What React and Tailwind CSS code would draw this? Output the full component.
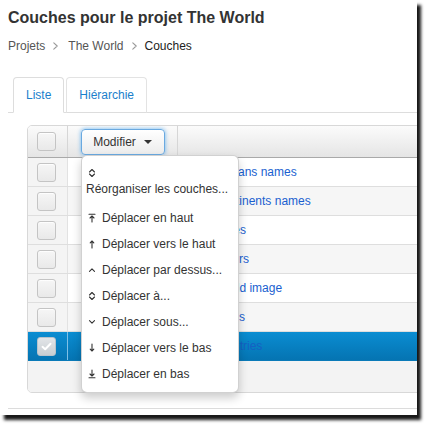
import React from "react";

const Ico = ({ d }) => (
  <svg width="8" height="10" viewBox="0 0 8 10" fill="none" stroke="#333" strokeWidth="1.1" strokeLinecap="round" strokeLinejoin="round">
    <path d={d} />
  </svg>
);

const I = {
  upDown: "M1.5 4 L4 1.5 L6.5 4 M1.5 6 L4 8.5 L6.5 6",
  toTop: "M1 1.2 H7 M4 9 V3 M2 5 L4 3 L6 5",
  up: "M4 9 V2 M2.2 3.8 L4 2 L5.8 3.8",
  chevUp: "M1.5 6.3 L4 3.8 L6.5 6.3",
  chevDown: "M1.5 3.7 L4 6.2 L6.5 3.7",
  down: "M4 1 V8 M2.2 6.2 L4 8 L5.8 6.2",
  toBottom: "M4 1 V7 M2 5 L4 7 L6 5 M1 8.8 H7",
};

const Chevron = () => (
  <svg width="5" height="8" viewBox="0 0 5 8" fill="none" stroke="#999" strokeWidth="1.1" strokeLinecap="round" strokeLinejoin="round">
    <path d="M0.8 0.8 L4.2 4 L0.8 7.2" />
  </svg>
);

const Checkbox = ({ checked }) =>
  checked ? (
    <div className="w-[19px] h-[19px] rounded-[3px] border border-[#b9c3cb] bg-gradient-to-b from-[#e2e5e8] to-[#c9ced2] flex items-center justify-center">
      <svg width="11" height="9" viewBox="0 0 11 9" fill="none" stroke="#ffffff" strokeWidth="2" strokeLinecap="round" strokeLinejoin="round">
        <path d="M1.5 4.8 L4.2 7.2 L9.5 1.8" />
      </svg>
    </div>
  ) : (
    <div className="w-[19px] h-[19px] rounded-[3px] border border-[#c4c4c4] bg-gradient-to-b from-[#f6f6f6] to-[#e9e9e9] shadow-[inset_0_1px_1px_rgba(255,255,255,0.9)]" />
  );

const rows = [
  { name: "Oceans names", pl: "pl-[38px]" },
  { name: "Continents names", pl: "pl-[36px]" },
  { name: "Lakes", pl: "pl-[36px]" },
  { name: "Rivers", pl: "pl-[37px]" },
  { name: "World image", pl: "pl-[37px]" },
  { name: "Cities", pl: "pl-[37px]" },
  { name: "Countries", pl: "pl-[33px]", selected: true },
];

const items = [
  { icon: I.toTop, label: "Déplacer en haut" },
  { icon: I.up, label: "Déplacer vers le haut" },
  { icon: I.chevUp, label: "Déplacer par dessus..." },
  { icon: I.upDown, label: "Déplacer à..." },
  { icon: I.chevDown, label: "Déplacer sous..." },
  { icon: I.down, label: "Déplacer vers le bas" },
  { icon: I.toBottom, label: "Déplacer en bas" },
];

export default function App() {
  return (
    <div className="w-[427px] h-[426px] bg-white font-['Liberation_Sans',Arial,sans-serif]">
      <div className="w-[417px] h-[415px] bg-white overflow-hidden shadow-[4px_5px_3px_rgba(0,0,0,0.9)] pl-[8px] pt-[8px]">
        <div className="text-[16px] leading-[20px] font-bold text-[#333] whitespace-nowrap">
          Couches pour le projet The World
        </div>
        <div className="mt-[10px] flex items-center text-[12px] leading-[16px] whitespace-nowrap">
          <span className="text-[#555]">Projets</span>
          <span className="ml-[8px] mr-[10px] flex items-center"><Chevron /></span>
          <span className="text-[#555]">The World</span>
          <span className="ml-[8px] mr-[8px] flex items-center"><Chevron /></span>
          <span className="text-[#222]">Couches</span>
        </div>

        <div className="mt-[23px] flex border-b border-[#ddd] pl-[5px] w-[420px]">
          <div className="h-[36px] -mb-px mr-[2px] px-[12px] rounded-t-[4px] border border-[#ddd] border-b-transparent bg-white flex items-center text-[12px] text-[#1a80cc]">
            Liste
          </div>
          <div className="h-[36px] -mb-px px-[12px] rounded-t-[4px] border border-[#e3e3e3] border-b-[#ddd] flex items-center text-[12px] text-[#1a80cc]">
            Hiérarchie
          </div>
        </div>

        <div className="relative mt-[12px] ml-[19px] w-[420px]">
          <div className="rounded-[5px] border border-[#d8d8d8] overflow-hidden">
            <div className="flex h-[32px] border-b border-[#a9a9a9] bg-gradient-to-b from-[#fbfbfb] to-[#e5e5e5]">
              <div className="w-[40px] border-r border-[#d6d6d6] flex items-center pl-[9px]">
                <Checkbox />
              </div>
              <div className="w-[110px] border-r border-[#d6d6d6] flex items-center justify-center">
                <div className="h-[26px] w-[84px] rounded-[4px] border border-[#6aa9e0] shadow-[0_0_4px_rgba(82,168,236,0.85)] bg-gradient-to-b from-white to-[#ececec] flex items-center justify-center text-[12px] text-[#333]">
                  <span>Modifier</span>
                  <span className="ml-[8px] w-0 h-0 border-t-[4px] border-t-[#333] border-x-[4px] border-x-transparent" />
                </div>
              </div>
              <div className="flex-1" />
            </div>
            {rows.map((r, i) => (
              <div
                key={i}
                className={
                  "flex h-[29px] border-b " +
                  (r.selected
                    ? "border-[#0a7ab8] bg-gradient-to-b from-[#0b8dd2] to-[#0574b2]"
                    : i % 2 === 0
                    ? "border-[#dedede] bg-white"
                    : "border-[#dedede] bg-[#f6f6f6]")
                }
              >
                <div
                  className={
                    "w-[40px] border-r flex items-center pl-[9px] " +
                    (r.selected ? "border-[#7fc0e6]" : "border-[#e2e2e2] bg-[#f4f4f4]")
                  }
                >
                  <Checkbox checked={r.selected} />
                </div>
                <div className={"w-[110px] border-r " + (r.selected ? "border-[#3a9fd8]" : "border-[#e2e2e2]")} />
                <div className={"flex-1 flex items-center text-[12px] whitespace-nowrap " + r.pl + " " + (r.selected ? "text-[#1560c4]" : "text-[#1a5fd0]")}>
                  {r.name}
                </div>
              </div>
            ))}
            <div className="h-[31px] bg-[#f3f3f3]" />
          </div>

          <div className="absolute left-[54px] top-[30px] w-[158px] bg-white border border-[rgba(0,0,0,0.18)] rounded-[6px] shadow-[0_5px_10px_rgba(0,0,0,0.2)] pt-[4px] pb-[5px] text-[12px] text-[#333] whitespace-nowrap">
            <div className="pt-[5px] pb-[8px] pl-[4px] leading-[16px]">
              <div className="h-[16px] flex items-center pl-[2px]"><Ico d={I.upDown} /></div>
              <div>Réorganiser les couches...</div>
            </div>
            {items.map((it, i) => (
              <div key={i} className="h-[26px] flex items-center pl-[4px]">
                <span className="w-[16px] flex items-center pl-[2px]"><Ico d={it.icon} /></span>
                <span>{it.label}</span>
              </div>
            ))}
          </div>
        </div>

        <div className="mt-[15px] border-t border-[#dcdcdc] w-[420px]" />
      </div>
    </div>
  );
}
